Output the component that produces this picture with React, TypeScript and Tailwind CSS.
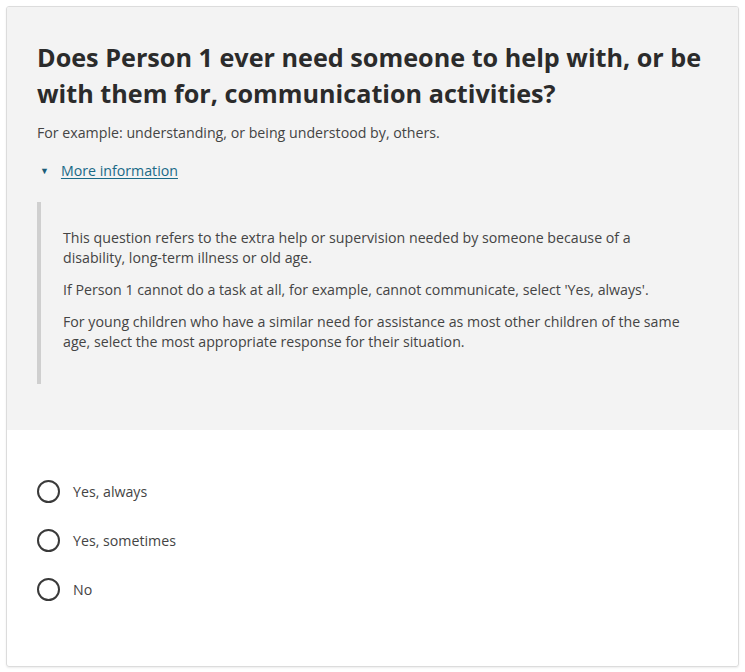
import React from 'react';

const options = ['Yes, always', 'Yes, sometimes', 'No'];

export default function App() {
  return (
    <div className="w-[745px] h-[672px] bg-white p-[6px]" style={{ fontFamily: '"Open Sans", "Noto Sans", sans-serif' }}>
      <div className="h-[661px] rounded-[3px] border border-[#dcdcdc] shadow-[0_1px_2px_rgba(0,0,0,0.08)] overflow-hidden flex flex-col">
        <div className="bg-[#f3f3f3] h-[423px] pl-[30px] pr-[30px] pt-[32px]">
          <h1 className="text-[25.2px] leading-[36px] font-bold text-[#2b2b2b]">
            Does Person 1 ever need someone to help with, or be with them for, communication activities?
          </h1>
          <p className="mt-[12px] text-[14.2px] leading-[20px] text-[#444]">
            For example: understanding, or being understood by, others.
          </p>
          <div className="mt-[18px] flex items-center gap-[12px] text-[14.2px] leading-[20px]">
            <span className="ml-[3px] text-[9px] text-[#1b5c78]">▼</span>
            <a className="text-[#1a6a87] underline underline-offset-2">More information</a>
          </div>
          <div className="mt-[21px] border-l-4 border-[#cfcfcf] pl-[22px] pt-[26px] pb-[32px] text-[14.2px] leading-[20px] text-[#444]">
            <div className="w-[628px] space-y-[12px]">
              <p>This question refers to the extra help or supervision needed by someone because of a disability, long-term illness or old age.</p>
              <p>If Person 1 cannot do a task at all, for example, cannot communicate, select 'Yes, always'.</p>
              <p>For young children who have a similar need for assistance as most other children of the same age, select the most appropriate response for their situation.</p>
            </div>
          </div>
        </div>
        <div className="pl-[30px] pt-[50px] flex flex-col gap-[26px]">
          {options.map((o) => (
            <label key={o} className="flex items-center gap-[13px] text-[14.2px] text-[#444]">
              <span className="w-[23px] h-[23px] rounded-full border-2 border-[#3a3a3a] bg-white" />
              {o}
            </label>
          ))}
        </div>
      </div>
    </div>
  );
}
